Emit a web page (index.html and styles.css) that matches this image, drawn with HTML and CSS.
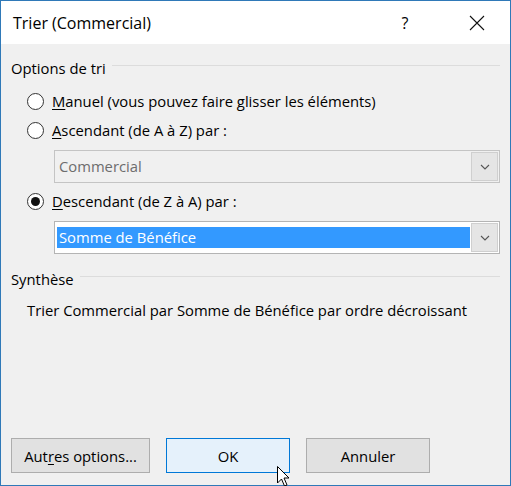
FILE: index.html
```html
<!DOCTYPE html>
<html lang="fr">
<head>
<meta charset="utf-8">
<title>Trier (Commercial)</title>
<link rel="stylesheet" href="styles.css">
</head>
<body>
<div class="window">
  <div class="titlebar">
    <span class="title">Trier (Commercial)</span>
    <span class="help">?</span>
    <span class="close">
      <svg width="16" height="16" viewBox="0 0 16 16"><path d="M1 1 L15 15 M15 1 L1 15" stroke="#111" stroke-width="1.1" fill="none"/></svg>
    </span>
  </div>
  <div class="body">
    <div class="group-head first"><span class="group-label">Options de tri</span><span class="rule"></span></div>
    <div class="options">
      <div class="radio-row r1"><span class="radio"></span><span class="label"><u>M</u>anuel (vous pouvez faire glisser les éléments)</span></div>
      <div class="radio-row r2"><span class="radio"></span><span class="label"><u>A</u>scendant (de A à Z) par :</span></div>
      <div class="combo disabled">
        <span class="combo-text">Commercial</span>
        <span class="drop"><svg width="10" height="6" viewBox="0 0 10 6"><path d="M1 1 L5 5 L9 1" stroke="#555" stroke-width="1.1" fill="none"/></svg></span>
      </div>
      <div class="radio-row r3"><span class="radio checked"></span><span class="label"><u>D</u>escendant (de Z à A) par :</span></div>
      <div class="combo active">
        <span class="combo-text selected">Somme de Bénéfice</span>
        <span class="drop"><svg width="10" height="6" viewBox="0 0 10 6"><path d="M1 1 L5 5 L9 1" stroke="#555" stroke-width="1.1" fill="none"/></svg></span>
      </div>
    </div>
    <div class="group-head second"><span class="group-label">Synthèse</span><span class="rule"></span></div>
    <p class="summary">Trier Commercial par Somme de Bénéfice par ordre décroissant</p>
    <div class="buttons">
      <button class="btn wide">Aut<u>r</u>es options...</button>
      <button class="btn default">OK</button>
      <button class="btn">Annuler</button>
    </div>
  </div>
  <svg class="cursor" width="14" height="22" viewBox="0 0 14 22"><path d="M0.5 0.5 L0.5 17 L4.5 13 L7.5 20 L10 19 L7 12 L12 12 Z" fill="#fff" stroke="#000" stroke-width="1"/></svg>
</div>
</body>
</html>
```
FILE: styles.css
```css
html, body {
  margin: 0;
  padding: 0;
}
body {
  width: 511px;
  height: 486px;
  overflow: hidden;
  font-family: "Open Sans", "Noto Sans", "DejaVu Sans", sans-serif;
  color: #000;
}
.window {
  position: relative;
  box-sizing: border-box;
  width: 511px;
  height: 486px;
  border: 1px solid #2f79b8;
  background: #f0f0f0;
  display: flex;
  flex-direction: column;
}
.titlebar {
  height: 43px;
  background: #fff;
  display: flex;
  align-items: center;
  flex-shrink: 0;
}
.title {
  margin-left: 12px;
  font-size: 16px;
  flex: 1;
}
.help {
  font-size: 16px;
  width: 20px;
  text-align: center;
  margin-right: 54px;
}
.close {
  display: flex;
  margin-right: 25px;
  margin-top: 1px;
}
.body {
  flex: 1;
  display: flex;
  flex-direction: column;
  padding: 0 10px 12px 10px;
  font-size: 14.8px;
}
.group-head {
  display: flex;
  align-items: center;
  height: 20px;
  line-height: 20px;
}
.group-head.first { margin-top: 14px; }
.group-head.second { margin-top: 15px; }
.group-label { padding-right: 6px; }
.rule {
  flex: 1;
  height: 1px;
  background: #dcdcdc;
  margin-top: -5px;
  margin-right: 0;
}
.options {
  padding-left: 16px;
  display: flex;
  flex-direction: column;
}
.radio-row {
  display: flex;
  align-items: center;
  height: 20px;
  line-height: 20px;
}
.r1 { margin-top: 13px; }
.r2 { margin-top: 9px; }
.r3 { margin-top: 8px; }
.radio {
  box-sizing: border-box;
  width: 17px;
  height: 17px;
  border: 1px solid #333;
  border-radius: 50%;
  background: #fff;
  margin-right: 8px;
  display: flex;
  align-items: center;
  justify-content: center;
}
.radio.checked::after {
  content: "";
  width: 9px;
  height: 9px;
  border-radius: 50%;
  background: #111;
}
.label u, .btn u { text-decoration-thickness: 1px; text-underline-offset: 2px; }
.combo {
  box-sizing: border-box;
  margin-left: 27px;
  margin-top: 10px;
  height: 33px;
  border: 1px solid #bdbdbd;
  display: flex;
  align-items: center;
  padding: 1px;
}
.combo.disabled { background: #f0f0f0; border-color: #c4c4c4; }
.combo.disabled .combo-text { color: #6d6d6d; padding-left: 2px; }
.combo.active { background: #fff; border-color: #b4b4b4; }
.combo-text {
  flex: 1;
  height: 21px;
  line-height: 21px;
  margin-left: 1px;
}
.combo-text.selected {
  background: #3399ff;
  color: #fff;
  padding-left: 2px;
  margin-left: 1px;
  margin-top: -1px;
}
.drop {
  box-sizing: border-box;
  width: 27px;
  height: 29px;
  background: #e5e5e5;
  border: 1px solid #cfcfcf;
  display: flex;
  align-items: center;
  justify-content: center;
  margin-left: 1px;
}
.summary {
  margin: 11px 0 0 16px;
  height: 20px;
  line-height: 20px;
}
.buttons {
  margin-top: auto;
  display: flex;
  gap: 16px;
}
.btn {
  box-sizing: border-box;
  width: 124px;
  height: 35px;
  background: #e1e1e1;
  border: 1px solid #adadad;
  font-family: inherit;
  font-size: 14.8px;
  color: #000;
  padding: 0;
}
.btn.wide { width: 139px; }
.btn.default {
  background: #e5f1fb;
  border-color: #0078d7;
}
.cursor {
  position: absolute;
  left: 276px;
  top: 465px;
}
```
